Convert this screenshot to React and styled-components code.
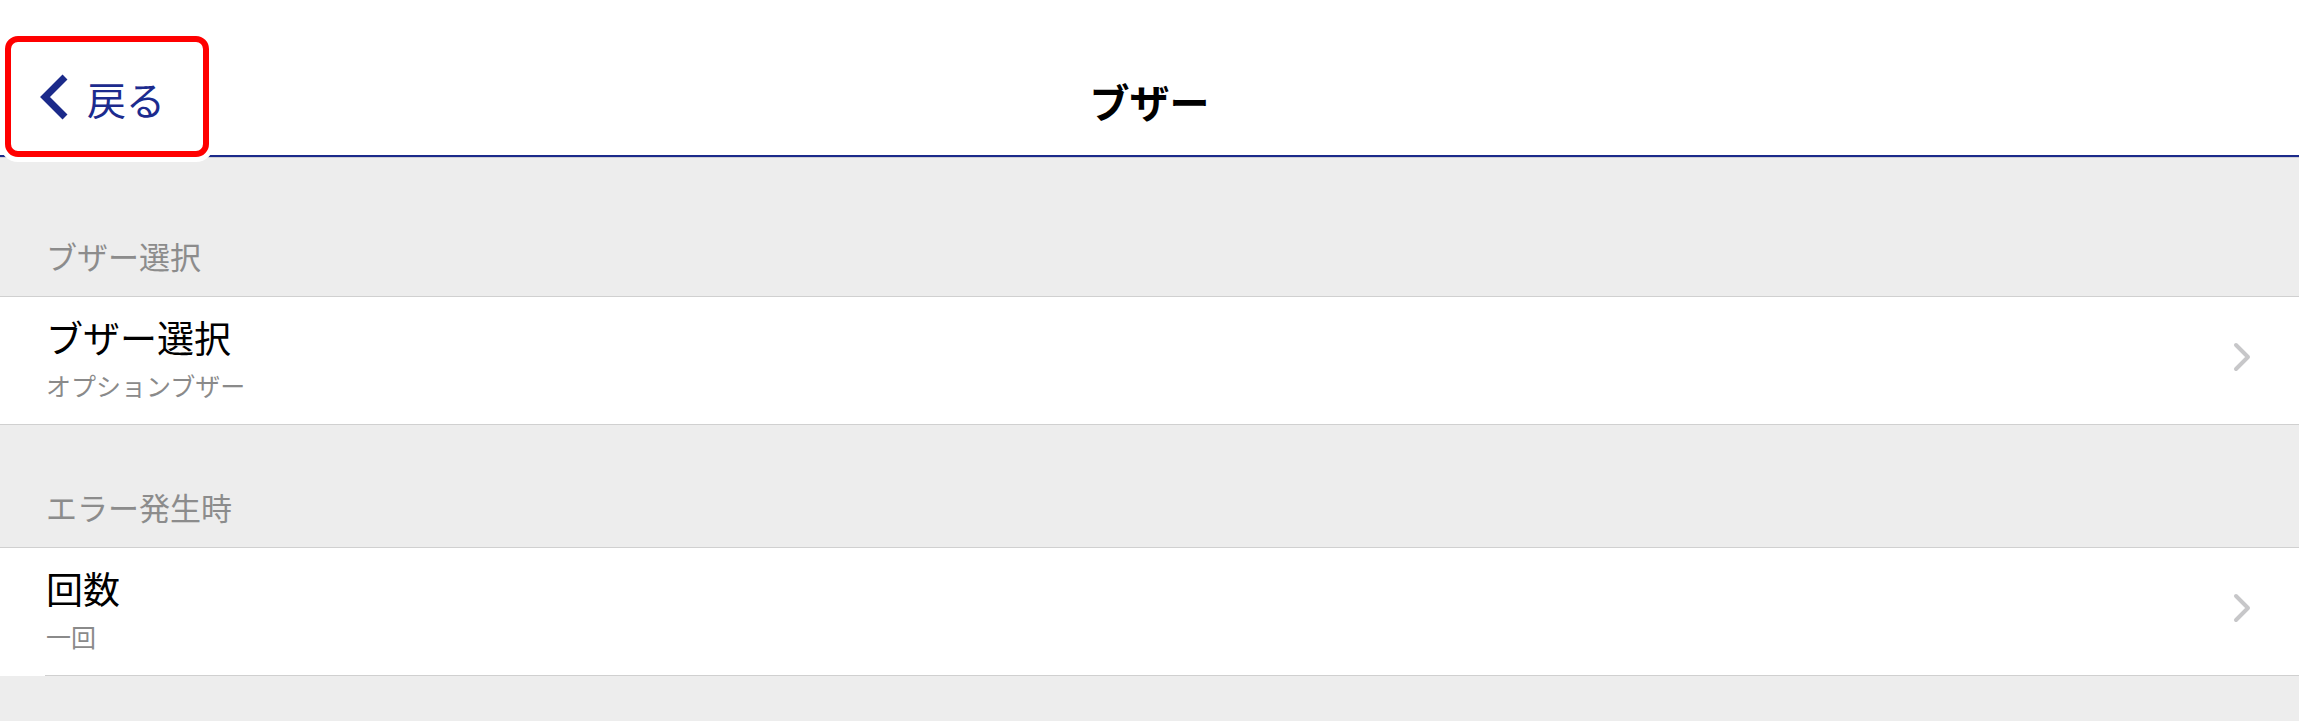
import React from "react";
import styled, { createGlobalStyle } from "styled-components";

const GlobalStyle = createGlobalStyle`
  html, body { margin: 0; padding: 0; background: #ededed; }
  body { font-family: "Noto Sans CJK JP", "Noto Sans", sans-serif; }
  * { box-sizing: border-box; }
`;

const Page = styled.div`
  min-height: 100vh;
  background: #ededed;
`;

const NavBar = styled.header`
  display: grid;
  grid-template-columns: 1fr auto 1fr;
  height: 157px;
  padding-top: 36px;
  background: #fff;
  border-bottom: 2px solid #1b2a8a;
  box-shadow: 0 1px 0 #cfcfd4;
  position: relative;
`;

const BackButton = styled.button`
  position: relative;
  z-index: 2;
  justify-self: start;
  align-self: start;
  margin-left: 5px;
  width: 204px;
  height: 121px;
  display: flex;
  align-items: center;
  gap: 18px;
  padding: 0 0 0 28px;
  background: #fff;
  border: 6px solid #ff0000;
  border-radius: 13px;
  box-shadow: 0 0 0 5px #fff;
  color: #1c2b8e;
  font-family: inherit;
  font-size: 39px;
  line-height: 1;
  cursor: pointer;
`;

const BackLabel = styled.span`
  display: block;
  margin-top: 3px;
`;

const Title = styled.h1`
  margin: 8px 0 0;
  align-self: center;
  font-size: 40px;
  font-weight: 700;
  color: #000;
  line-height: 1;
`;

const Content = styled.main`
  padding-top: 17px;
`;

const SectionHeader = styled.div`
  height: 122px;
  display: flex;
  align-items: flex-end;
  padding: 0 46px 25px;
  font-size: 31px;
  line-height: 30px;
  color: #8c8c8c;
`;

const Group = styled.div`
  background: #fff;
  border-top: 1px solid #d0d0d0;
  border-bottom: ${(p) => (p.$inset ? "none" : "1px solid #d0d0d0")};
`;

const Row = styled.div`
  display: flex;
  padding-left: 45px;
  cursor: pointer;
`;

const RowBody = styled.div`
  flex: 1;
  display: flex;
  align-items: center;
  padding: 20px 48px 24px 1px;
  border-bottom: ${(p) => (p.$inset ? "1px solid #d0d0d0" : "none")};
  height: ${(p) => (p.$inset ? "128px" : "127px")};
`;

const RowText = styled.div`
  flex: 1;
  display: flex;
  flex-direction: column;
`;

const RowTitle = styled.div`
  font-size: 37px;
  line-height: 41px;
  color: #000;
`;

const RowSub = styled.div`
  margin-top: 12px;
  font-size: 25px;
  line-height: 30px;
  color: #8a8a8a;
`;

const Chevron = styled.svg`
  flex: none;
  margin-top: -4px;
`;

const BackChevron = () => (
  <svg width="30" height="48" viewBox="0 0 30 48" aria-hidden="true">
    <polyline
      points="26,4 6,24 26,44"
      fill="none"
      stroke="#1b2a8a"
      strokeWidth="7"
      strokeLinejoin="miter"
      strokeMiterlimit="10"
    />
  </svg>
);

const Disclosure = () => (
  <Chevron width="18" height="30" viewBox="0 0 18 30" aria-hidden="true">
    <polyline
      points="3,3 15,15 3,27"
      fill="none"
      stroke="#c7c7c9"
      strokeWidth="4"
      strokeLinecap="round"
      strokeLinejoin="round"
    />
  </Chevron>
);

const sections = [
  {
    header: "ブザー選択",
    inset: false,
    rows: [{ title: "ブザー選択", sub: "オプションブザー" }],
  },
  {
    header: "エラー発生時",
    inset: true,
    rows: [{ title: "回数", sub: "一回" }],
  },
];

export default function App() {
  return (
    <Page>
      <GlobalStyle />
      <NavBar>
        <BackButton>
          <BackChevron />
          <BackLabel>戻る</BackLabel>
        </BackButton>
        <Title>ブザー</Title>
        <div />
      </NavBar>
      <Content>
        {sections.map((s) => (
          <section key={s.header}>
            <SectionHeader>{s.header}</SectionHeader>
            <Group $inset={s.inset}>
              {s.rows.map((r) => (
                <Row key={r.title}>
                  <RowBody $inset={s.inset}>
                    <RowText>
                      <RowTitle>{r.title}</RowTitle>
                      <RowSub>{r.sub}</RowSub>
                    </RowText>
                    <Disclosure />
                  </RowBody>
                </Row>
              ))}
            </Group>
          </section>
        ))}
      </Content>
    </Page>
  );
}
